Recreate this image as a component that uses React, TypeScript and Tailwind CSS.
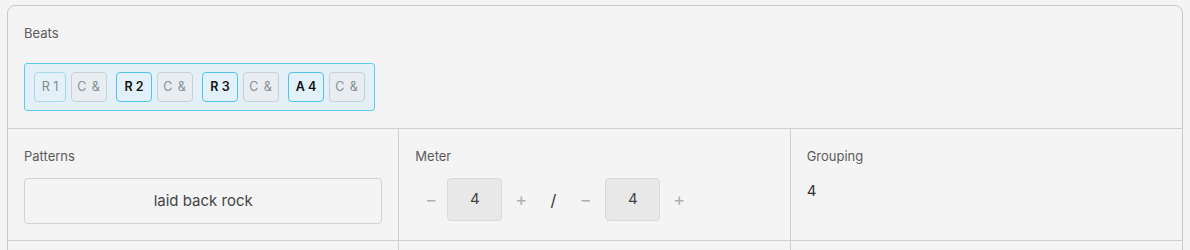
import React from "react";

interface Beat {
  label: string;
  kind: "first" | "accent" | "sub";
}

const beats: Beat[][] = [
  [{ label: "R 1", kind: "first" }, { label: "C &", kind: "sub" }],
  [{ label: "R 2", kind: "accent" }, { label: "C &", kind: "sub" }],
  [{ label: "R 3", kind: "accent" }, { label: "C &", kind: "sub" }],
  [{ label: "A 4", kind: "accent" }, { label: "C &", kind: "sub" }],
];

const beatClass: Record<Beat["kind"], string> = {
  first: "w-8 border-[#a9d8ea] bg-[#e3f0f7] text-[#7d8a91] font-normal",
  accent: "w-9 border-[#52c4ea] bg-[#e2f1f9] text-[#111] font-semibold",
  sub: "w-9 border-[#c9d0d4] bg-[#e7edf0] text-[#8a8f93] font-normal tracking-[1px]",
};

const Label = ({ children }: { children: React.ReactNode }) => (
  <div className="text-[13px] leading-5 text-[#5b5b5b]">{children}</div>
);

const Stepper = ({ value, first }: { value: number; first?: boolean }) => (
  <>
    <button
      className={`${first ? "w-8" : "w-[39px]"} text-center text-[18px] leading-none text-[#b0b0b0]`}
    >
      −
    </button>
    <div className="flex h-[43px] w-[55px] items-center justify-center rounded-[4px] border border-[#d9d9d9] bg-[#e8e8e8] text-[15px] text-[#444]">
      {value}
    </div>
    <button className="w-[38px] text-center text-[18px] leading-none text-[#b0b0b0]">+</button>
  </>
);

export default function App() {
  return (
    <div className="h-[250px] overflow-hidden bg-[#f4f4f4] px-[7px] pt-[5px] font-['Inter','Noto_Sans',sans-serif]">
      <div className="rounded-lg border border-[#c9c9c9] bg-[#f4f4f4]">
        <div className="border-b border-[#cfcfcf] px-4 pt-[17px] pb-[17px]">
          <Label>Beats</Label>
          <div className="mt-[20px] inline-flex gap-[9px] rounded-[3px] border border-[#5dcdee] bg-[#e3f0f7] px-[9px] py-2">
            {beats.map((pair, i) => (
              <div key={i} className="flex gap-[5px]">
                {pair.map((b, j) => (
                  <div
                    key={j}
                    className={`flex h-[30px] items-center justify-center rounded-[4px] border text-[12.5px] ${beatClass[b.kind]}`}
                  >
                    {b.label}
                  </div>
                ))}
              </div>
            ))}
          </div>
        </div>

        <div className="grid grid-cols-3 border-b border-[#cfcfcf]">
          <div className="border-r border-[#cfcfcf] px-4 pt-[17px] pb-[16px]">
            <Label>Patterns</Label>
            <button className="mt-[12px] flex h-[46px] w-full items-center justify-center rounded-[4px] border border-[#d2d2d2] bg-[#f4f4f4] text-[15px] text-[#444]">
              laid back rock
            </button>
          </div>
          <div className="border-r border-[#cfcfcf] px-4 pt-[17px]">
            <Label>Meter</Label>
            <div className="mt-[12px] flex items-center">
              <Stepper value={4} first />
              <span className="w-[26px] text-center text-[16px] text-[#333]">/</span>
              <Stepper value={4} />
            </div>
          </div>
          <div className="px-4 pt-[17px]">
            <Label>Grouping</Label>
            <div className="mt-[15px] text-[15px] leading-5 text-[#333]">4</div>
          </div>
        </div>

        <div className="grid h-[40px] grid-cols-3">
          <div className="border-r border-[#cfcfcf]" />
          <div className="border-r border-[#cfcfcf]" />
          <div />
        </div>
      </div>
    </div>
  );
}
